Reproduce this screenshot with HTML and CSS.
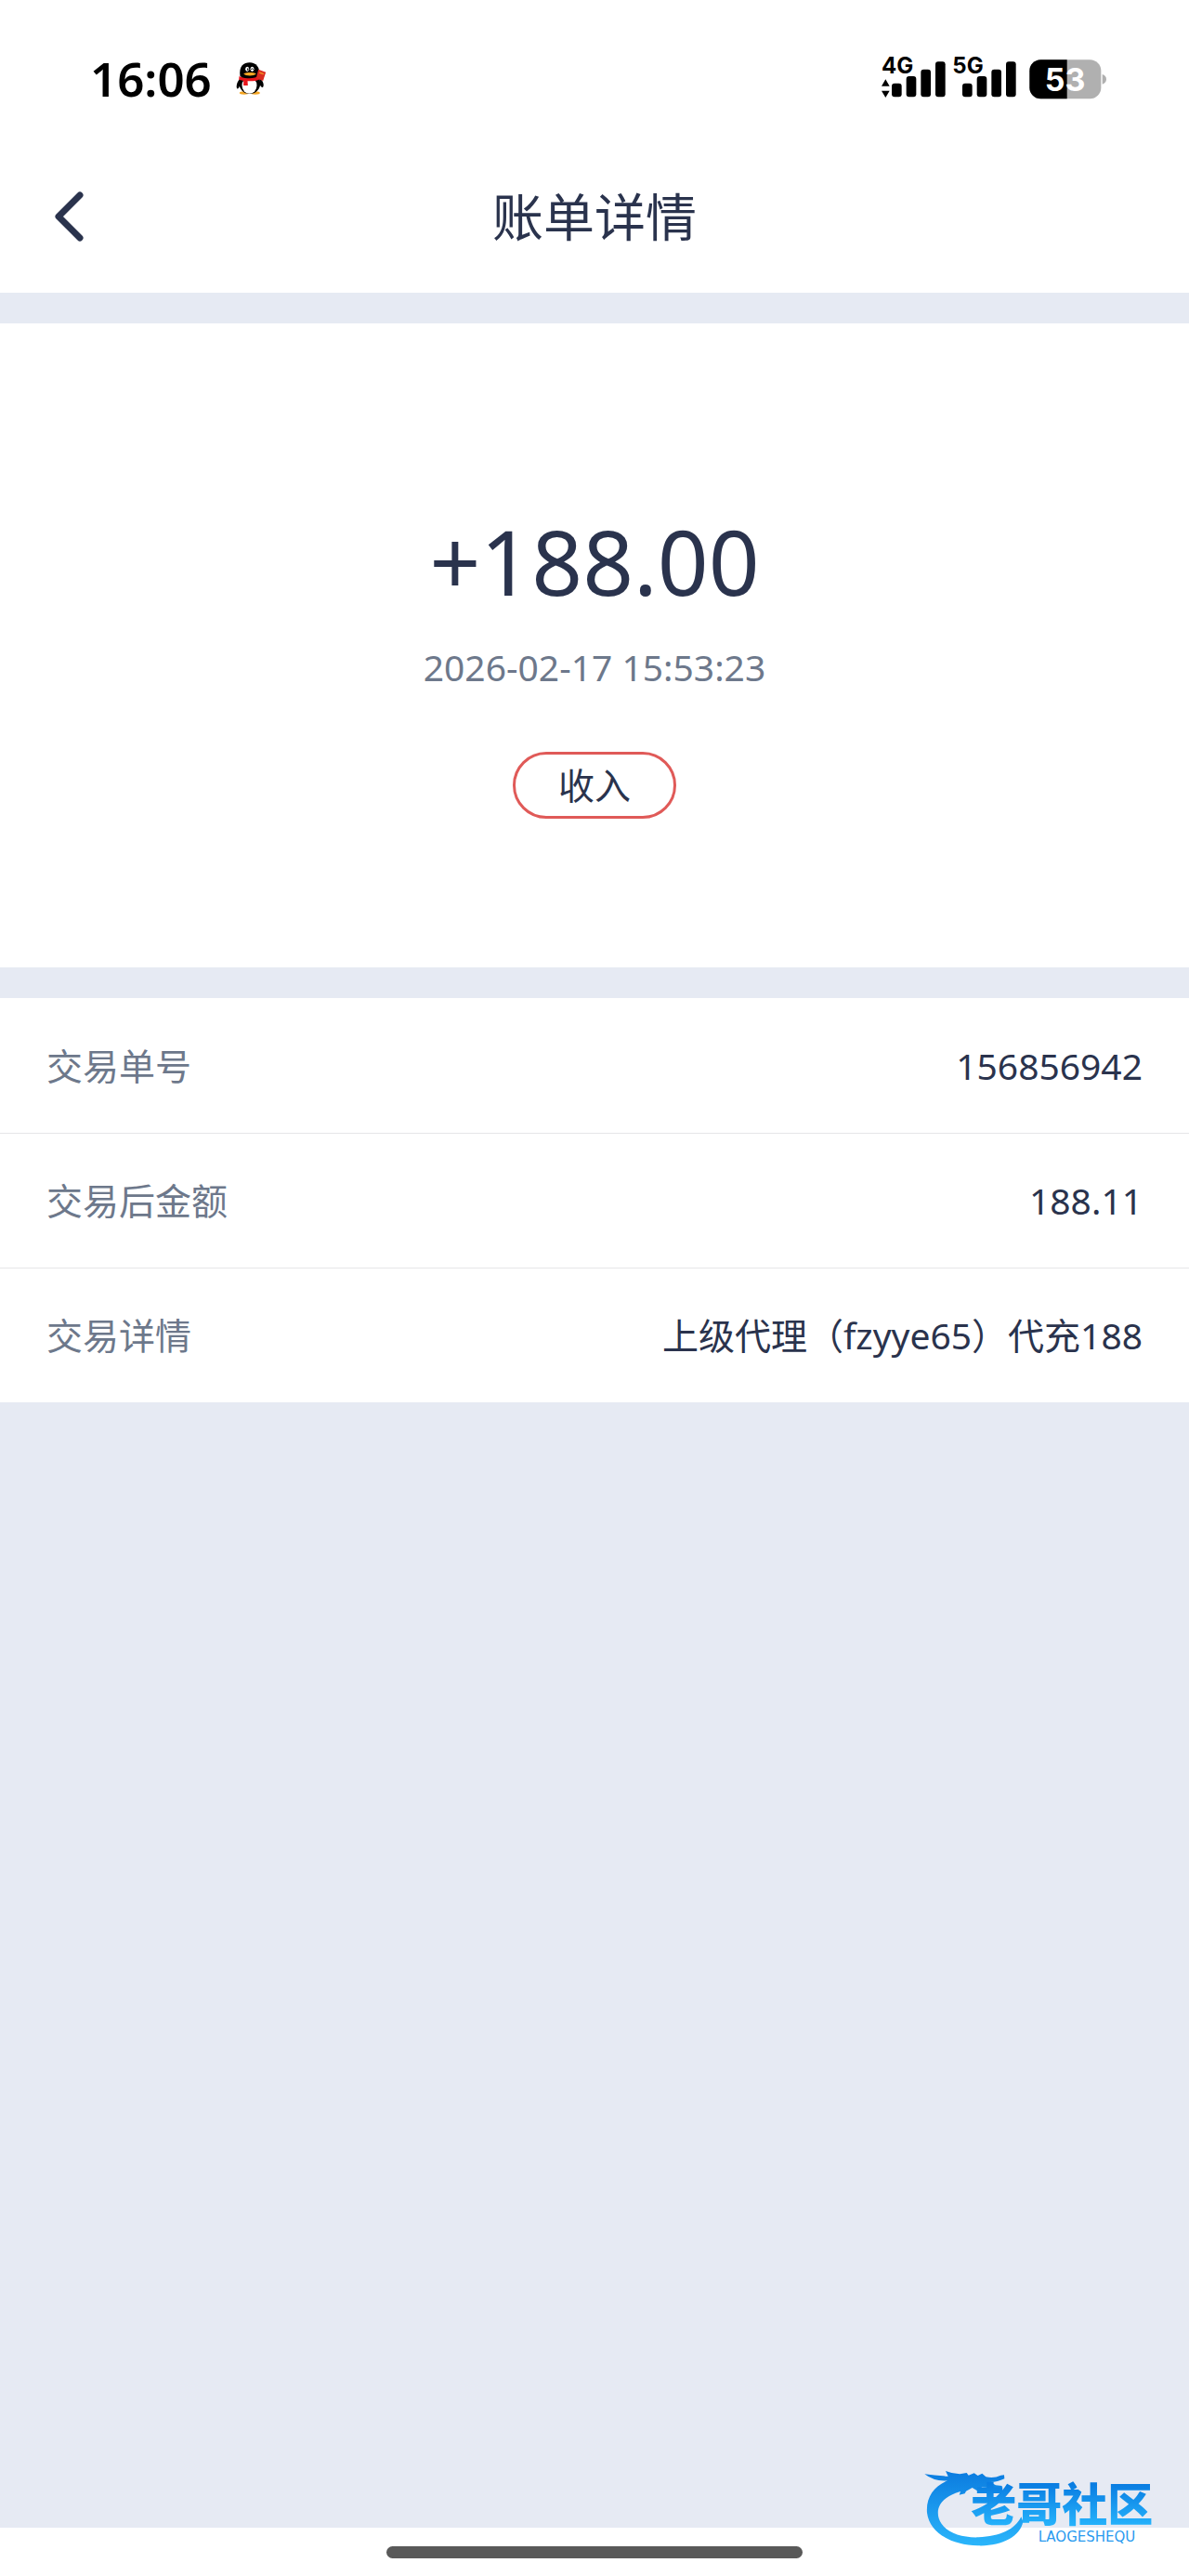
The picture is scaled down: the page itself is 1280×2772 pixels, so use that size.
FILE: index.html
```html
<!DOCTYPE html>
<html lang="zh-CN">
<head>
<meta charset="utf-8">
<meta name="viewport" content="width=device-width, initial-scale=1">
<title>账单详情</title>
<link rel="stylesheet" href="styles.css">
</head>
<body>
<div class="page">
  <div class="status">
    <div class="status-left">
      <span class="clock">16:06</span>
      <svg class="penguin" viewBox="580 80 98 108" aria-hidden="true">
        <ellipse cx="606" cy="182" rx="15" ry="5" fill="#f5a623"/>
        <ellipse cx="642" cy="182" rx="15" ry="5" fill="#f5a623"/>
        <path d="M594 134C583 145 579 160 583 168C586 170 590 164 592 158ZM655 134C668 142 671 156 667 163C664 167 659 160 656 154Z" fill="#000"/>
        <ellipse cx="624" cy="152" rx="34" ry="33" fill="#000"/>
        <ellipse cx="623" cy="158" rx="24" ry="26" fill="#fff"/>
        <path d="M593 128C588 96 605 84 624 84C643 84 660 98 654 130C640 140 606 140 593 128Z" fill="#000"/>
        <ellipse cx="616" cy="105" rx="6" ry="8" fill="#fff"/>
        <ellipse cx="632" cy="105" rx="6" ry="8" fill="#fff"/>
        <ellipse cx="618" cy="106" rx="2" ry="4" fill="#000"/>
        <path d="M628 106q4-5 8 0" fill="none" stroke="#000" stroke-width="3"/>
        <path d="M604 120C615 115 635 115 645 120C638 129 611 129 604 120Z" fill="#f5a623"/>
        <path d="M590 128C607 137 640 138 656 126L658 137C645 145 630 144 617 144L618 158L604 158L604 143L589 139Z" fill="#e8151b"/>
        <path d="M652 106L676 115L667 143L645 134Z" fill="#d92c20"/>
        <path d="M655 116l14 5" stroke="#f08a24" stroke-width="5"/>
      </svg>
    </div>
    <svg class="signals" viewBox="51 36 738 186" role="img" aria-label="4G 5G 53%">
      <g class="net"><text x="57" y="114">4G</text><text x="286" y="114">5G</text></g>
      <path d="M57 155L70 133L83 155ZM57 170L70 192L83 170Z"/>
      <rect x="90" y="146" width="32" height="44" rx="9"/>
      <rect x="137" y="123" width="32" height="67" rx="9"/>
      <rect x="184" y="101" width="32" height="89" rx="9"/>
      <rect x="231" y="76" width="32" height="114" rx="9"/>
      <rect x="318" y="146" width="32" height="44" rx="9"/>
      <rect x="365" y="123" width="32" height="67" rx="9"/>
      <rect x="412" y="101" width="32" height="89" rx="9"/>
      <rect x="459" y="76" width="32" height="114" rx="9"/>
      <rect x="535" y="70" width="231" height="126" rx="36" fill="#b0b0b0"/>
      <path d="M656 70H571A36 36 0 0 0 535 106V160A36 36 0 0 0 571 196H656Z"/>
      <path d="M770 117Q783 121 783 133T770 149Z" fill="#b0b0b0"/>
      <text class="charge" x="650" y="170">53</text>
    </svg>
  </div>

  <header class="header">
    <button class="back" type="button" aria-label="返回">
      <svg viewBox="0 0 40 60" aria-hidden="true"><path d="M31 7L8 30L31 53"/></svg>
    </button>
    <h1 class="title">账单详情</h1>
  </header>

  <main class="content">
    <section class="summary">
      <p class="amount">+188.00</p>
      <time class="time" datetime="2026-02-17T15:53:23">2026-02-17 15:53:23</time>
      <span class="tag">收入</span>
    </section>
    <dl class="details">
      <div class="row"><dt>交易单号</dt><dd>156856942</dd></div>
      <div class="row"><dt>交易后金额</dt><dd>188.11</dd></div>
      <div class="row"><dt>交易详情</dt><dd>上级代理（fzyye65）代充188</dd></div>
    </dl>
  </main>

  <footer class="homebar"><span class="handle"></span></footer>

  <svg class="watermark" viewBox="0 0 930 426" role="img" aria-label="老哥社区">
    <defs>
      <linearGradient id="ring" gradientUnits="userSpaceOnUse" x1="0" y1="90" x2="0" y2="330">
        <stop offset="0" stop-color="#0b7ce0"/><stop offset="1" stop-color="#2bb6fb"/>
      </linearGradient>
      <linearGradient id="word" gradientUnits="userSpaceOnUse" x1="0" y1="130" x2="0" y2="262">
        <stop offset="0" stop-color="#0a7de2"/><stop offset="1" stop-color="#25b2fb"/>
      </linearGradient>
    </defs>
    <path fill="url(#ring)" d="M76 97Q110 102 152 104L144 87Q166 96 190 97L212 93L218 101L236 94L248 102L262 95L274 106Q300 112 322 101L333 100L334 112Q312 123 288 123L306 133L326 135L327 152Q305 148 284 141L262 139L246 151L230 141L210 152L206 160L188 164L192 153L176 158C130 176 112 206 122 240C136 282 188 303 250 301C320 298 368 276 388 235L394 250C386 300 322 331 248 328C160 325 92 286 84 222C80 172 106 136 150 118Q108 122 76 97Z"/>
    <text class="brand" x="226" y="250">老哥社区</text>
    <text class="latin" x="600" y="314">LAOGESHEQU</text>
  </svg>
</div>
</body>
</html>
```
FILE: styles.css
```css
* {
  box-sizing: border-box;
}

body {
  margin: 0;
  background: #fff;
  color: #2a334d;
  font-family: "Noto Sans", "Noto Sans CJK SC", sans-serif;
}

.page {
  position: relative;
  display: flex;
  flex-direction: column;
  min-height: 100vh;
}

/* Phone status bar */
.status {
  display: flex;
  align-items: center;
  justify-content: space-between;
  height: 150px;
  padding: 18px 87px 0 97px;
}

.status-left {
  display: flex;
  align-items: center;
  gap: 26px;
}

.clock {
  color: #000;
  font-size: 51px;
  font-weight: 600;
  line-height: 64px;
}

.penguin {
  width: 33px;
  height: 36px;
}

.signals {
  width: 246px;
  height: 62px;
}

.signals text {
  font-family: Inter, sans-serif;
  font-weight: 700;
}

.net text {
  font-size: 72px;
}

.signals .charge {
  fill: #fff;
  font-size: 102px;
  text-anchor: middle;
}

/* Title bar */
.header {
  display: grid;
  grid-template-columns: 1fr auto 1fr;
  align-items: center;
  height: 165px;
  padding: 0 55px;
}

.back {
  width: 40px;
  height: 60px;
  padding: 0;
  border: 0;
  background: none;
}

.back svg {
  display: block;
  fill: none;
  stroke: #2a334d;
  stroke-width: 7;
  stroke-linecap: round;
  stroke-linejoin: round;
}

.title {
  margin: 0;
  font-size: 55px;
  font-weight: 400;
  line-height: 80px;
}

/* Bill */
.content {
  display: flex;
  flex: 1;
  flex-direction: column;
  gap: 33px;
  padding-top: 33px;
  background: #e6eaf3;
}

.summary {
  display: flex;
  flex-direction: column;
  align-items: center;
  padding: 196px 50px 160px;
  background: #fff;
}

.amount {
  margin: 0 0 30px;
  font-size: 96px;
  line-height: 120px;
}

.time {
  margin-bottom: 67px;
  color: #6d788b;
  font-size: 39px;
  line-height: 48px;
}

.tag {
  padding: 0 46px;
  border: 3px solid #e05a58;
  border-radius: 36px;
  font-size: 39px;
  line-height: 66px;
}

.details {
  margin: 0;
  background: #fff;
}

.row {
  display: flex;
  align-items: center;
  justify-content: space-between;
  height: 145px;
  padding: 0 50px;
  font-size: 39px;
  line-height: 56px;
}

.row + .row {
  border-top: 1px solid #e6e6e8;
}

.row dt {
  color: #6d788b;
}

.row dd {
  margin: 0;
}

/* Gesture bar */
.homebar {
  display: flex;
  align-items: center;
  justify-content: center;
  height: 52px;
}

.handle {
  width: 35%;
  height: 13px;
  border-radius: 7px;
  background: #595959;
}

/* Community mark over the bottom corner */
.watermark {
  position: absolute;
  right: 0;
  bottom: 0;
  width: 310px;
  height: 142px;
}

.brand {
  fill: url(#word);
  font-family: "Noto Sans CJK SC", sans-serif;
  font-size: 147px;
  font-weight: 900;
}

.latin {
  fill: #2a9bef;
  font-family: "DejaVu Sans", sans-serif;
  font-size: 45px;
  text-anchor: middle;
}
```
